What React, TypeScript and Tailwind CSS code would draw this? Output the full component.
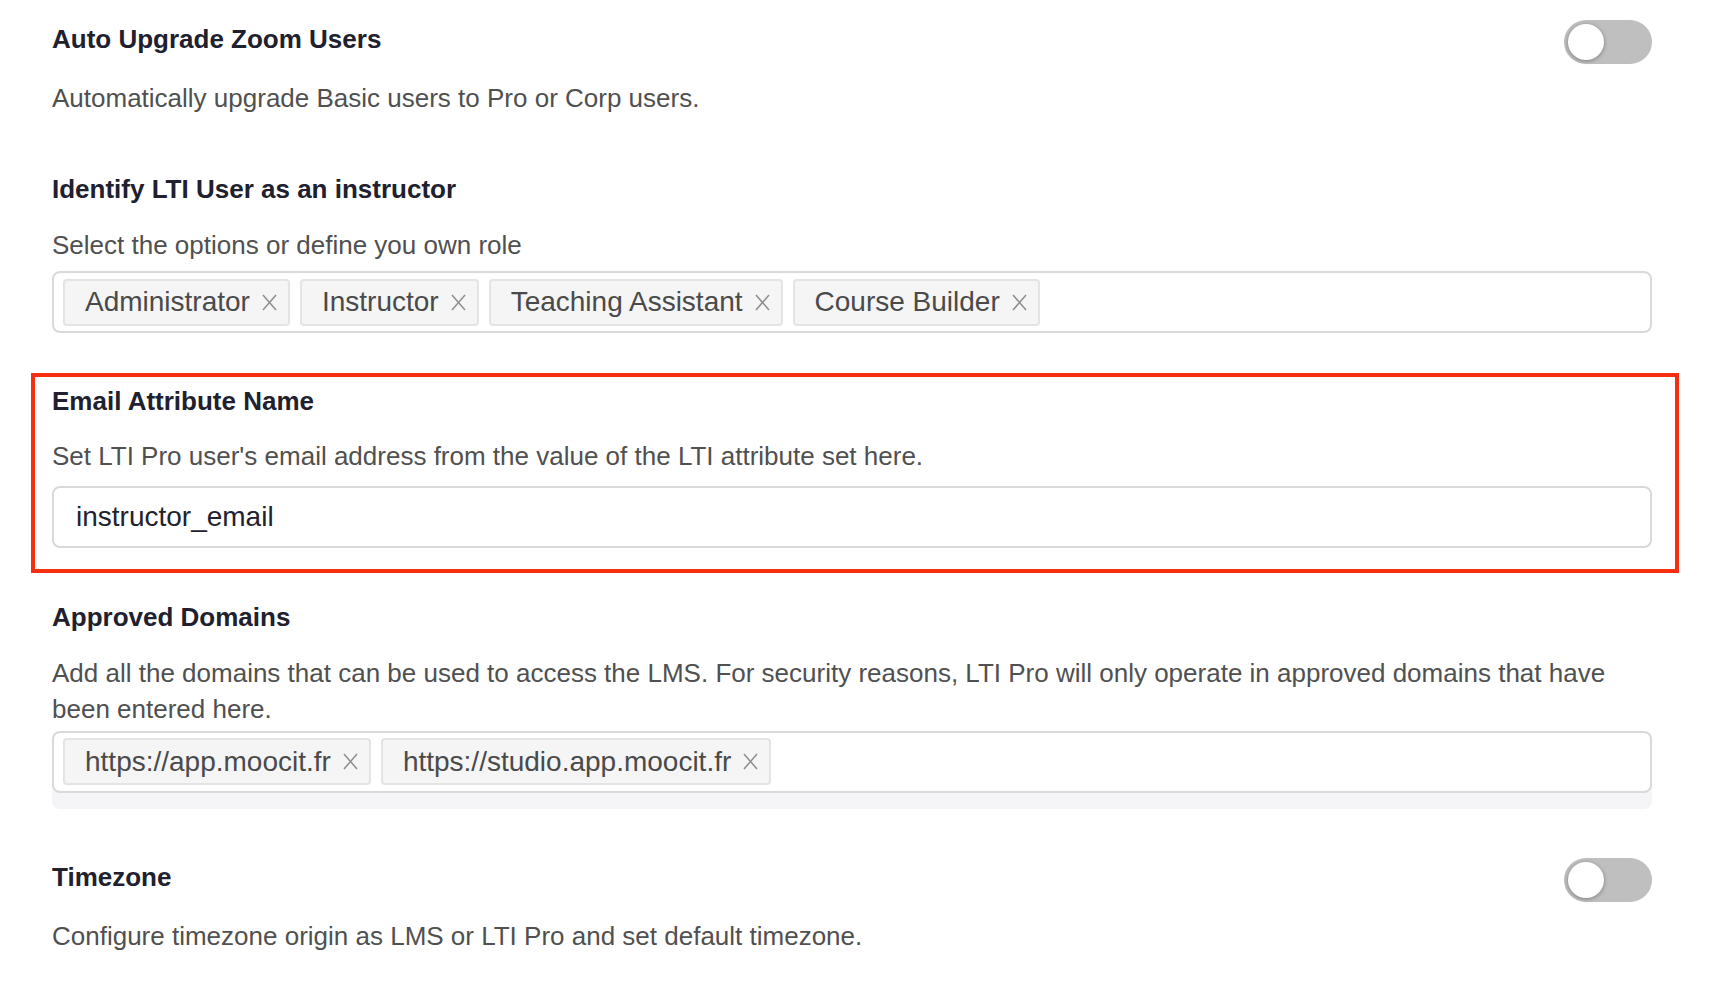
import React from "react";

const titleCls = "text-[26px] leading-[32px] font-bold text-[#20202e]";
const descCls = "text-[26px] leading-[36px] text-[#505050]";

function Toggle() {
  return (
    <div className="flex items-center w-[88px] h-[44px] p-[4px] rounded-full bg-[#bfbfbf] shrink-0">
      <div className="w-[36px] h-[36px] rounded-full bg-white shadow-[0_1px_4px_rgba(0,0,0,0.35)]" />
    </div>
  );
}

function Tag({ label }: { label: string }) {
  return (
    <span className="flex items-center h-[47px] pl-[20px] pr-[11px] gap-[12px] bg-[#f5f5f5] border-2 border-[#e4e4e4] rounded-[4px] text-[28px] leading-none text-[#4a4a4a] whitespace-nowrap">
      {label}
      <svg width="15" height="17" viewBox="0 0 15 17" className="shrink-0">
        <path d="M1 1L14 16M14 1L1 16" stroke="#8e8e8e" strokeWidth="1.5" fill="none" />
      </svg>
    </span>
  );
}

function TagBox({ tags, className = "" }: { tags: string[]; className?: string }) {
  return (
    <div className={`flex items-center gap-[10px] h-[62px] px-[9px] border-2 border-[#d9d9d9] rounded-[8px] bg-white ${className}`}>
      {tags.map((t) => (
        <Tag key={t} label={t} />
      ))}
    </div>
  );
}

export default function App() {
  return (
    <div className="min-h-screen bg-white pl-[52px] pr-[66px] pt-[20px] pb-[40px] font-['Liberation_Sans',Helvetica,Arial,sans-serif]">
      {/* Auto upgrade */}
      <div className="flex justify-between items-start">
        <h3 className={`mt-[3px] ${titleCls}`}>Auto Upgrade Zoom Users</h3>
        <Toggle />
      </div>
      <p className={`mt-[16px] ${descCls}`}>Automatically upgrade Basic users to Pro or Corp users.</p>

      {/* Instructor roles */}
      <h3 className={`mt-[57px] ${titleCls}`}>Identify LTI User as an instructor</h3>
      <p className={`mt-[22px] ${descCls}`}>Select the options or define you own role</p>
      <TagBox className="mt-[8px]" tags={["Administrator", "Instructor", "Teaching Assistant", "Course Builder"]} />

      {/* Email attribute (highlighted) */}
      <section className="mt-[40px] ml-[-21.5px] mr-[-26.7px] border-4 border-[#f72d10] pl-[17.5px] pr-[22.7px] pt-[8px] pb-[21.5px]">
        <h3 className={titleCls}>Email Attribute Name</h3>
        <p className={`mt-[21px] ${descCls}`}>Set LTI Pro user's email address from the value of the LTI attribute set here.</p>
        <div className="mt-[11.7px] flex items-center h-[62.3px] pl-[22px] border-2 border-[#d9d9d9] rounded-[8px] bg-white text-[28px] text-[#22222f]">
          instructor_email
        </div>
      </section>

      {/* Approved domains */}
      <h3 className={`mt-[28px] ${titleCls}`}>Approved Domains</h3>
      <p className={`mt-[21.7px] ${descCls}`}>
        Add all the domains that can be used to access the LMS. For security reasons, LTI Pro will only operate in approved domains that have
        <br />
        been entered here.
      </p>
      <div className="mt-[3.5px] bg-[#f5f5f7] rounded-[8px] pb-[16px]">
        <TagBox tags={["https://app.moocit.fr", "https://studio.app.moocit.fr"]} className="h-[62.6px]" />
      </div>

      {/* Timezone */}
      <div className="mt-[49.7px] flex justify-between items-start">
        <h3 className={`mt-[3px] ${titleCls}`}>Timezone</h3>
        <Toggle />
      </div>
      <p className={`mt-[16px] ${descCls}`}>Configure timezone origin as LMS or LTI Pro and set default timezone.</p>
    </div>
  );
}
